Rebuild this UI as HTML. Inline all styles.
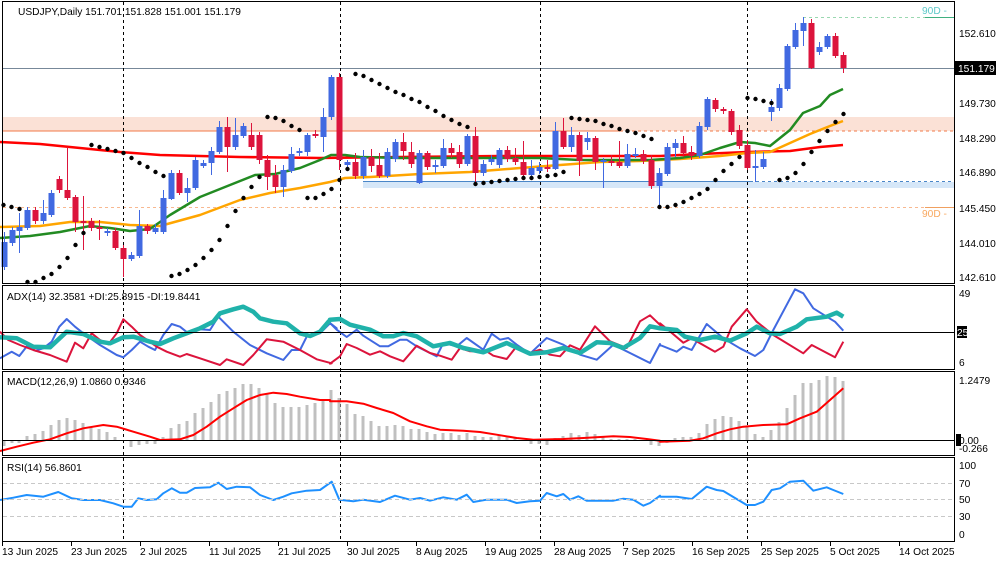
<!DOCTYPE html>
<html><head><meta charset="utf-8"><style>
html,body{margin:0;padding:0;background:#fff;width:1000px;height:563px;overflow:hidden}
svg{display:block;font-family:"Liberation Sans",Tahoma,sans-serif;font-size:10.2px}
</style></head><body>
<svg id="s" width="1000" height="563" xmlns="http://www.w3.org/2000/svg">
<rect width="1000" height="563" fill="#fff"/>
<rect x="3" y="117" width="951" height="14" fill="#fbe1d6"/>
<line x1="3" y1="131" x2="620" y2="131" stroke="#f07a4a" stroke-width="1"/>
<line x1="620" y1="131" x2="954" y2="131" stroke="#f07a4a" stroke-width="1" stroke-dasharray="3,3"/>
<rect x="363" y="182" width="591" height="6" fill="#d6e7f8"/>
<line x1="363" y1="181.5" x2="750" y2="181.5" stroke="#4a86c8"/>
<line x1="750" y1="181.5" x2="954" y2="181.5" stroke="#4a86c8" stroke-dasharray="3,3"/>
<line x1="3" y1="207.5" x2="954" y2="207.5" stroke="#f8b890" stroke-dasharray="3,3"/>
<line x1="925" y1="207.5" x2="954" y2="207.5" stroke="#f0a060"/>
<line x1="803" y1="17.5" x2="954" y2="17.5" stroke="#9ad8b0" stroke-dasharray="3,3"/>
<line x1="925" y1="17.5" x2="954" y2="17.5" stroke="#40b080"/>
<line x1="3" y1="68.5" x2="954" y2="68.5" stroke="#778899"/>
<text x="922" y="14" fill="#5cc8c8">90D -</text>
<text x="922" y="217" fill="#f8a860">90D -</text>
<g id="vl" stroke="#000" stroke-dasharray="3,3"></g>
<g id="main"></g>
<g id="ind"></g>
<g fill="none" stroke="#000">
<rect x="2.5" y="1.5" width="952" height="282"/>
<rect x="2.5" y="285.5" width="952" height="84"/>
<rect x="2.5" y="371.5" width="952" height="84"/>
<rect x="2.5" y="457.5" width="952" height="84"/>
<line x1="3" y1="332.5" x2="954" y2="332.5"/>
<line x1="3" y1="440.5" x2="954" y2="440.5"/>
</g>
<g stroke="#c8c8c8" stroke-dasharray="4,3">
<line x1="3" y1="483.5" x2="954" y2="483.5"/>
<line x1="3" y1="499.5" x2="954" y2="499.5"/>
<line x1="3" y1="516.5" x2="954" y2="516.5"/>
</g>
<g fill="#000">
<text x="18" y="15">USDJPY,Daily  151.701 151.828 151.001 151.179</text>
<text x="7" y="300">ADX(14) 32.3581 +DI:25.8915 -DI:19.8441</text>
<text x="7" y="385">MACD(12,26,9) 1.0860 0.9346</text>
<text x="7" y="471">RSI(14) 56.8601</text>
<text x="959" y="37">152.610</text>
<text x="959" y="107">149.730</text>
<text x="959" y="142">148.290</text>
<text x="959" y="176">146.890</text>
<text x="959" y="212">145.450</text>
<text x="959" y="247">144.010</text>
<text x="959" y="281">142.610</text>
<text x="959" y="297">49</text>
<text x="959" y="366">6</text>
<text x="959" y="384">1.2479</text>
<text x="959" y="452">-0.266</text>
<text x="959" y="469">100</text>
<text x="959" y="487">70</text>
<text x="959" y="503">50</text>
<text x="959" y="520">30</text>
<text x="959" y="538">0</text>
</g>
<rect x="955" y="61" width="41" height="14" fill="#000"/>
<text x="958" y="72" fill="#fff">151.179</text>
<rect x="957" y="326" width="10" height="12" fill="#000"/>
<text x="957" y="336" fill="#fff">25</text>
<rect x="956" y="434" width="5" height="12" fill="#000"/>
<text x="959" y="444" fill="#000">0.00</text>
<g fill="#000" id="dates"></g>
</svg>
<script>
var NS="http://www.w3.org/2000/svg";
function el(p,t,a){var e=document.createElementNS(NS,t);for(var k in a)e.setAttribute(k,a[k]);document.getElementById(p).appendChild(e);return e;}
[123,340,540,747].forEach(function(x){el('vl','line',{x1:x+.5,y1:2,x2:x+.5,y2:541});});
var B="#4169e1",R="#dc143c";
var C=[[4,242,267,B,232,270],[12,230,243,B,227,246],[19,227,231,B,213,253],[27,210,228,B,207,230],[35,210,221,R,207,224],[43,213,221,B,200,224],[51,193,215,B,190,217],[59,179,190,R,176,193],[67,190,198,R,147,200],[75,197,222,R,195,232],[83,221,223,R,196,250],[91,221,228,R,218,231],[99,227,229,R,220,240],[107,231,233,B,228,236],[115,231,248,R,228,250],[123,248,259,R,245,277],[131,255,259,B,252,261],[139,226,256,B,210,258],[147,226,231,R,224,234],[155,228,232,B,224,234],[163,198,232,B,190,234],[171,173,199,B,170,200],[179,173,193,R,170,195],[187,188,193,B,178,202],[195,160,188,B,157,190],[203,163,166,B,160,168],[211,151,163,B,147,175],[219,127,152,B,121,154],[227,127,147,R,117,172],[235,135,147,B,118,150],[243,126,136,B,123,138],[251,135,147,R,123,150],[259,135,160,R,132,164],[267,160,177,R,155,190],[275,175,187,R,165,193],[283,170,187,B,165,197],[291,154,171,B,147,173],[299,151,153,B,148,156],[307,135,152,B,133,156],[315,134,136,R,130,138],[323,117,137,B,108,152],[331,77,117,B,75,120],[339,77,160,R,73,170],[347,162,165,B,160,169],[355,162,176,R,153,179],[363,157,176,B,150,179],[371,157,166,R,149,172],[379,165,176,R,153,178],[387,152,176,B,148,178],[395,142,159,B,139,162],[403,142,151,R,133,160],[411,152,164,R,142,168],[419,153,183,B,150,184],[427,153,167,R,151,170],[435,165,167,B,160,173],[443,148,166,B,139,168],[451,148,153,R,143,158],[459,152,164,R,145,168],[467,136,164,B,134,166],[475,136,173,R,127,183],[483,164,173,B,160,176],[491,159,162,B,155,165],[499,150,165,B,148,168],[507,150,159,R,146,162],[515,158,162,R,148,165],[523,162,175,R,141,177],[531,168,175,B,160,178],[539,167,171,B,162,174],[547,167,169,R,160,172],[555,131,169,B,122,170],[563,131,147,R,118,149],[571,135,147,B,127,152],[579,135,161,R,132,176],[587,138,142,B,132,150],[595,138,162,R,136,170],[603,160,161,B,158,188],[611,161,162,R,155,166],[619,162,166,R,141,168],[627,154,166,B,144,168],[635,154,156,B,148,158],[643,154,161,R,150,164],[651,160,186,R,155,189],[659,173,186,B,168,208],[667,147,174,B,143,176],[675,143,148,B,139,157],[683,143,153,R,136,157],[691,152,156,R,146,160],[699,126,156,B,122,158],[707,99,127,B,97,130],[715,100,109,R,98,112],[723,109,111,R,107,114],[731,111,132,R,109,135],[739,130,146,R,125,149],[747,145,168,R,140,170],[755,166,167,B,150,182],[763,159,167,B,152,169],[771,107,112,B,99,121],[779,88,108,B,84,111],[787,46,89,B,44,91],[795,30,47,B,23,49],[803,23,31,B,17,46],[811,23,68,R,19,69],[819,47,52,B,42,55],[827,36,47,B,34,49],[835,36,56,R,33,58],[843,55,68,R,52,73]];
function pl(p,pts,col,w){var s=pts.map(function(q){return q[0].toFixed(1)+","+q[1].toFixed(1)}).join(" ");el(p,'polyline',{points:s,fill:'none',stroke:col,'stroke-width':w,'stroke-linejoin':'round'});}
var H=[[4,446],[12,443],[19,443],[27,436],[35,434],[43,431],[51,425],[59,420],[67,418],[75,420],[83,423],[91,427],[99,429],[107,432],[115,437],[123,441],[131,447],[139,445],[147,444],[155,444],[163,437],[171,428],[179,424],[187,421],[195,413],[203,408],[211,402],[219,394],[227,391],[235,388],[243,384],[251,384],[259,388],[267,393],[275,403],[283,407],[291,407],[299,407],[307,405],[315,403],[323,399],[331,390],[339,398],[347,404],[355,414],[363,416],[371,421],[379,426],[387,426],[395,425],[403,426],[411,429],[419,429],[427,432],[435,434],[443,433],[451,433],[459,435],[467,433],[475,436],[483,437],[491,437],[499,435],[507,437],[515,438],[523,441],[531,444],[539,444],[547,445],[555,438],[563,436],[571,433],[579,435],[587,432],[595,434],[603,436],[611,439],[619,439],[627,439],[635,439],[643,440],[651,445],[659,446],[667,443],[675,438],[683,437],[691,437],[699,433],[707,424],[715,419],[723,416],[731,417],[739,421],[747,427],[755,434],[763,437],[771,430],[779,422],[787,408],[795,395],[803,383],[811,383],[819,380],[827,376],[835,377],[843,381]];
H.forEach(function(h){var hh=Math.abs(h[1]-440);if(hh<1)hh=1;el('ind','rect',{x:h[0]-1.5,y:h[1]<440?h[1]:440,width:3,height:hh,fill:'#c0c0c0'});});
pl('main',[[0,142],[40,144],[120,152],[160,155],[240,157],[320,158],[400,157],[500,156],[600,156],[660,156],[700,154],[747,152],[790,151],[820,147],[843,145]],'#ff0000',2.5);
pl('main',[[0,227],[40,226],[70,222],[100,222],[130,225],[160,226],[200,215],[240,200],[270,193],[300,188],[330,182],[345,178],[370,177],[420,174],[470,172],[520,168],[560,165],[600,162],[640,161],[680,159],[720,156],[747,153],[770,152],[790,143],[810,134],[830,126],[843,121]],'#ffa500',2.5);
pl('main',[[0,238],[30,236],[60,232],[90,226],[110,228],[130,231],[150,229],[170,215],[200,197],[230,185],[255,175],[275,174],[300,168],[320,160],[331,155],[345,155],[360,157],[400,158],[450,158],[500,158],[540,158],[580,160],[620,160],[650,160],[680,158],[700,155],[720,148],[740,142],[755,143],[770,146],[790,130],[803,113],[820,106],[830,95],[843,89]],'#228b22',2.5);
C.forEach(function(c){el('main','line',{x1:c[0]+.5,y1:c[4],x2:c[0]+.5,y2:c[5],stroke:c[3],'stroke-width':1});var h=c[2]-c[1];if(h<2){h=2;}el('main','rect',{x:c[0]-2.5,y:c[1],width:6,height:h,fill:c[3]});});
var D=[[3,205],[11,207],[19,209],[27,282],[35,282],[43,278],[51,274],[59,267],[67,258],[75,245],[83,233],[91,145],[99,147],[107,149],[115,151],[123,153],[131,158],[139,163],[147,167],[155,172],[163,176],[171,276],[179,274],[187,270],[195,265],[203,258],[211,250],[219,240],[227,226],[235,211],[243,198],[251,187],[259,177],[267,117],[275,118],[283,121],[291,126],[299,130],[307,198],[315,198],[323,194],[331,189],[339,180],[347,169],[355,74],[363,76],[371,80],[379,84],[387,88],[395,92],[403,95],[411,99],[419,102],[427,107],[435,111],[443,116],[451,120],[459,124],[467,127],[475,184],[483,183],[491,182],[499,181],[507,180],[515,179],[523,178],[531,178],[539,177],[547,176],[555,175],[563,172],[571,118],[579,119],[587,120],[595,121],[603,124],[611,126],[619,129],[627,131],[635,133],[643,136],[651,139],[659,207],[667,207],[675,205],[683,202],[691,198],[699,194],[707,189],[715,180],[723,171],[731,164],[739,157],[747,98],[755,99],[763,101],[771,103],[779,180],[787,178],[795,173],[803,164],[811,152],[819,141],[827,131],[835,122],[843,114]];
D.forEach(function(d){el('main','circle',{cx:d[0]+.5,cy:d[1],r:2.2,fill:'#000'});});
function mp(a,ox,oy){return a.map(function(q){return [ox+q[0]/3,oy+q[1]/3];});}
var blue=mp([[0,235],[35,215],[58,228],[82,197],[106,212],[130,205],[155,185],[178,140],[200,117],[225,140],[250,160],[300,195],[350,225],[370,232],[395,210],[420,185],[445,200],[465,210],[490,165],[515,132],[540,140],[565,160],[590,147],[630,150],[655,110],[700,155],[750,195],[800,220],[850,240],[875,210],[900,210],[920,170],[960,160],[990,130],[1010,145]],0,280)
.concat(mp([[0,120],[20,140],[50,162],[80,140],[100,158],[150,190],[175,190],[210,170],[230,170],[260,190],[300,210],[320,220],[340,180],[380,190],[410,165],[460,200],[485,152],[510,170],[535,165],[560,185],[600,212],[650,165],[700,185],[750,215],[800,230],[850,185],[900,210],[960,240],[990,183]],330,283))
.concat(mp([[0,195],[50,215],[70,200],[95,210],[140,132],[190,175],[240,205],[285,228],[310,210],[340,150],[405,28],[430,40],[460,85],[500,110],[525,125],[550,152]],660,280));
var red=mp([[0,155],[25,180],[60,195],[100,210],[150,225],[200,245],[225,188],[250,205],[275,160],[300,180],[325,193],[350,160],[370,118],[395,140],[420,165],[445,182],[470,200],[500,215],[540,230],[560,222],[600,235],[660,255],[680,238],[730,255],[760,225],[800,178],[850,185],[900,210],[950,238],[995,250]],0,280)
.concat(mp([[0,242],[30,220],[50,183],[80,195],[120,215],[150,205],[180,220],[220,235],[260,188],[300,210],[330,218],[365,230],[390,195],[420,205],[470,205],[490,218],[530,228],[560,190],[600,210],[630,200],[660,215],[690,220],[720,187],[750,200],[795,130],[840,175],[890,195],[930,115],[960,97],[1000,135]],330,283))
.concat(mp([[0,130],[25,150],[70,188],[95,175],[120,190],[165,215],[190,200],[215,140],[260,88],[290,125],[340,165],[430,220],[455,195],[525,232],[550,185]],660,280));
var teal=mp([[0,172],[50,175],[100,200],[150,202],[200,155],[250,162],[300,185],[330,190],[370,172],[400,170],[450,185],[480,192],[520,175],[560,160],[600,145],[640,125],[660,100],[700,88],[730,80],[760,95],[780,115],[820,125],[860,130],[900,160],[930,168],[960,155],[990,120]],0,280)
.concat(mp([[0,110],[30,108],[60,125],[120,140],[160,160],[190,160],[220,150],[260,160],[310,190],[360,180],[400,195],[460,208],[530,180],[600,212],[650,208],[700,195],[750,210],[800,178],[840,180],[880,195],[930,165],[960,130]],330,283))
.concat(mp([[0,145],[50,150],[75,170],[120,180],[165,170],[210,182],[260,160],[290,140],[330,160],[360,162],[410,140],[440,118],[500,110],[530,98],[550,110]],660,280));
pl('ind',blue,'#4169e1',2);
pl('ind',red,'#dc143c',2);
pl('ind',teal,'#20b2aa',4.5);
var sig=mp([[0,513],[50,500],[100,488],[150,478],[200,460],[250,445],[310,435],[350,440],[400,455],[450,470],[480,480],[540,478],[580,465],[620,440],[660,410],[700,385],[740,360],[780,345],[820,338],[860,342],[900,350],[960,360],[990,360]],0,280)
.concat(mp([[0,355],[50,355],[100,362],[140,375],[190,390],[240,415],[290,430],[330,440],[400,443],[450,447],[500,455],[560,465],[610,470],[700,468],[760,465],[850,460],[900,462],[950,468],[990,473]],330,283))
.concat(mp([[0,485],[90,482],[130,475],[170,460],[210,448],[250,440],[310,435],[380,433],[420,415],[470,395],[510,360],[550,325]],660,280));
pl('ind',sig,'#ff0000',2);
var rsi=mp([[0,660],[40,653],[80,645],[130,650],[175,636],[215,655],[250,660],[300,660],[340,670],[370,680],[395,680],[415,655],[440,660],[470,658],[490,640],[515,625],[540,638],[560,638],[585,624],[630,622],[655,608],[680,627],[710,620],[750,622],[780,645],[820,660],[850,650],[875,640],[920,632],[960,630],[995,605]],0,280)
.concat(mp([[28,650],[70,655],[100,650],[150,657],[195,638],[240,650],[270,645],[300,653],[340,643],[380,650],[410,635],[430,657],[470,650],[530,650],[560,660],[600,655],[630,653],[650,630],[680,640],[700,633],[720,650],[745,640],[770,653],[850,653],[880,647],[910,650],[940,668],[960,660],[990,638]],330,283))
.concat(mp([[0,650],[50,650],[95,657],[140,620],[170,630],[190,633],[260,675],[285,675],[310,665],[335,630],[360,625],[390,605],[430,602],[460,632],[500,622],[520,630],[550,642]],660,280));
pl('ind',rsi,'#1e90ff',2);
var dl=["13 Jun 2025","23 Jun 2025","2 Jul 2025","11 Jul 2025","21 Jul 2025","30 Jul 2025","8 Aug 2025","19 Aug 2025","28 Aug 2025","7 Sep 2025","16 Sep 2025","25 Sep 2025","5 Oct 2025","14 Oct 2025"];
var dx=[2,71,140,209,278,347,416,485,554,623,692,761,830,899];
dl.forEach(function(t,i){var e=el('dates','text',{x:dx[i],y:555});e.textContent=t;el('dates','line',{x1:dx[i]+.5,y1:542,x2:dx[i]+.5,y2:546,stroke:'#000'});});
</script>
</body></html>
